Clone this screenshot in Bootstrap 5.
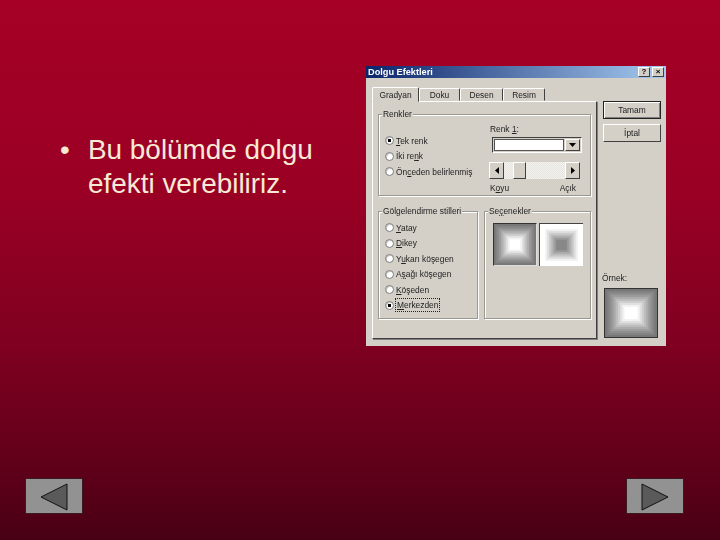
<!DOCTYPE html>
<html lang="tr">
<head>
<meta charset="utf-8">
<title>Dolgu Efektleri</title>
<link rel="stylesheet" href="https://cdn.jsdelivr.net/npm/bootstrap@5.3.0/dist/css/bootstrap.min.css">
<style>
html,body{margin:0;height:100%;}
body{background:#7a001c;overflow:hidden;}
.slide-page{width:720px;height:540px;background:linear-gradient(180deg,#a60026 0%,#9a0024 35%,#7e0020 65%,#62001a 85%,#480014 100%);font-family:"Liberation Sans",Arial,sans-serif;}
.slide-top{padding-top:66px;}
.slide-text{width:366px;padding:67px 0 0 60px;color:#f6ead6;font-size:27.9px;line-height:34px;}
.slide-bullet{width:28px;flex:none;}
.slide-lines{width:240px;}
.slide-nav{padding:0 37px 27px 26px;}
.nav-shape{display:block;width:56px;height:34px;padding:0;border:0;border-radius:0;background:#929292;box-shadow:0 0 0 1px #3c1a22;}
.nav-shape svg{display:block;width:56px;height:34px;}

.dlg{width:300px;height:280px;background:#d4d0c8;color:#222;font-family:"Liberation Sans",Arial,sans-serif;font-size:8.4px;line-height:12px;filter:blur(.4px);}
.dlg u{text-underline-offset:1px;}
.dlg-title{height:12px;padding:0 2px;background:linear-gradient(90deg,#0a246a,#a6caf0);color:#fff;font-weight:700;font-size:9.2px;line-height:12px;}
.dlg-ctl{width:12px;height:10px;margin-top:1px;background:#d4d0c8;border:1px solid;border-color:#fff #404040 #404040 #fff;color:#000;font-size:8px;line-height:8px;font-weight:700;text-align:center;}
.dlg-ctls{gap:2px;padding-right:0;}
.dlg-body{padding:8px 5px 0 6px;gap:6px;}
.dlg-left{width:225px;}
.dlg .dlg-tabs{border:0;height:15px;flex-wrap:nowrap;align-items:flex-end;}
.dlg-tabs .nav-link,.dlg-tabs .nav-link:hover{display:block;padding:0;height:13px;margin:0;border:1px solid;border-color:#fff #404040 transparent #fff;border-radius:2px 2px 0 0;background:#d4d0c8;color:#222;text-align:center;line-height:12px;}
.dlg-tabs .nav-link.active{height:15px;margin:0;border-color:#fff #404040 #d4d0c8 #fff;background:#d4d0c8;color:#222;position:relative;top:1px;line-height:14px;}
.tab-w1{width:47px;}.tab-w2{width:41px;}.tab-w3{width:43px;}.tab-w4{width:42px;}
.dlg-panel{height:238px;padding:12px 5px 0 5px;border:1px solid;border-color:#fff #404040 #404040 #fff;box-shadow:1px 1px 0 #808080;}
.dlg-group{position:relative;border:1px solid #9a9890;box-shadow:inset 1px 1px 0 #fff,1px 1px 0 #fff;}
.dlg-legend{display:table;margin:-7px 0 0 3px;padding:0 1px;background:#d4d0c8;line-height:12px;}
.grp-colors{height:82px;margin-bottom:15px;}
.grp-row{gap:6px;}
.grp-shade{width:100px;height:108px;}
.grp-opts{width:107px;height:108px;padding:0;}
.radio-list{display:flex;flex-direction:column;padding:0 0 0 6px;margin:0;}
.radio-item{display:flex;align-items:center;gap:2px;height:15.5px;margin:0;padding:0;min-height:0;}
.dlg .form-check-input{float:none;width:9px;height:9px;margin:0;flex:none;background-color:#fff;background-image:none;border:1px solid #7d7d7d;box-shadow:inset 1px 1px 0 #c8c8c8;}
.dlg .form-check-input:checked{background-color:#fff;background-image:radial-gradient(circle,#000 0 1.6px,transparent 2px);border-color:#7d7d7d;}
.colors-left{width:107px;padding-top:13px;}
.colors-right{width:95px;padding:3px 0 0 4px;}
.combo{width:90px;height:16px;margin:2px 0 9px 2px;background:#d4d0c8;border:1px solid;border-color:#404040 #fff #fff #404040;padding:1px;gap:1px;}
.combo-field{flex:1;background:#fff;border:1px solid #555;}
.spin-btn{width:15px;flex:none;background:#d4d0c8;border:1px solid;border-color:#fff #404040 #404040 #fff;display:flex;align-items:center;justify-content:center;}
.scroll-track{width:91px;height:17px;margin-left:-1px;background:repeating-conic-gradient(#e6e4de 0 25%,#f4f3ef 0 50%) 0 0/2px 2px;}
.scroll-btn{width:15px;flex:none;background:#d4d0c8;border:1px solid;border-color:#fff #404040 #404040 #fff;display:flex;align-items:center;justify-content:center;}
.scroll-thumb{width:13px;margin-left:9px;background:#d4d0c8;border:1px solid;border-color:#fff #404040 #404040 #fff;}
.scroll-labels{width:90px;padding:1px 4px 0 0;margin-top:2px;}
.swatches{padding:6px 0 0 8px;gap:2px;}
.swatch{width:44px;height:43px;display:block;}
.swatch-on{border:1px solid #333;border-color:#333 #ddd #ddd #333;}
.swatch-b{border-top:1px solid #444;border-left:1px solid #444;}
.shade-list{padding-top:3px;}
.focused{outline:1px dotted #222;outline-offset:0;padding:0 1px;}
.dlg-side{width:58px;padding-top:15px;}
.dlg-btn,.dlg-btn:hover{display:block;width:58px;height:18px;margin-bottom:5px;padding:0;border-radius:0;font-size:8.4px;line-height:14px;color:#222;background:#d4d0c8;border:1px solid;border-color:#fff #404040 #404040 #fff;}
.dlg-btn-def,.dlg-btn-def:hover{outline:1px solid #222;outline-offset:-1px;border-color:#222;box-shadow:inset 1px 1px 0 #fff,inset -1px -1px 0 #808080;}
.sample-lbl{margin:130px 0 4px -1px;}
.sample{width:54px;height:50px;margin-left:1px;display:block;border:1px solid #333;}
</style>
</head>
<body>
<svg width="0" height="0" class="d-block" aria-hidden="true">
  <symbol id="fade-dark" viewBox="0 0 24 24" preserveAspectRatio="none">
    <rect width="24" height="24" fill="#777"/><rect x="1" y="1" width="22" height="22" fill="#828282"/><rect x="2" y="2" width="20" height="20" fill="#8e8e8e"/><rect x="3" y="3" width="18" height="18" fill="#9c9c9c"/><rect x="4" y="4" width="16" height="16" fill="#acacac"/><rect x="5" y="5" width="14" height="14" fill="#bcbcbc"/><rect x="6" y="6" width="12" height="12" fill="#cecece"/><rect x="7" y="7" width="10" height="10" fill="#e0e0e0"/><rect x="8" y="8" width="8" height="8" fill="#f2f2f2"/><rect x="9" y="9" width="6" height="6" fill="#fff"/>
  </symbol>
  <symbol id="fade-light" viewBox="0 0 24 24" preserveAspectRatio="none">
    <rect width="24" height="24" fill="#fff"/><rect x="3" y="3" width="18" height="18" fill="#f0f0f0"/><rect x="4" y="4" width="16" height="16" fill="#e0e0e0"/><rect x="5" y="5" width="14" height="14" fill="#cecece"/><rect x="6" y="6" width="12" height="12" fill="#bcbcbc"/><rect x="7" y="7" width="10" height="10" fill="#aaa"/><rect x="8" y="8" width="8" height="8" fill="#999"/><rect x="9" y="9" width="6" height="6" fill="#888"/>
  </symbol>
</svg>
<main class="slide-page d-flex flex-column">
  <div class="slide-top d-flex">
    <div class="slide-text d-flex align-items-start">
      <span class="slide-bullet">•</span>
      <span class="slide-lines">Bu bölümde dolgu efekti verebiliriz.</span>
    </div>
    <section class="dlg d-flex flex-column">
      <div class="dlg-title d-flex justify-content-between">
        <span>Dolgu Efektleri</span>
        <span class="dlg-ctls d-flex"><span class="dlg-ctl">?</span><span class="dlg-ctl">×</span></span>
      </div>
      <div class="dlg-body d-flex">
        <div class="dlg-left">
          <ul class="nav nav-tabs dlg-tabs">
            <li class="nav-item"><a class="nav-link active tab-w1" href="#">Gradyan</a></li>
            <li class="nav-item"><a class="nav-link tab-w2" href="#">Doku</a></li>
            <li class="nav-item"><a class="nav-link tab-w3" href="#">Desen</a></li>
            <li class="nav-item"><a class="nav-link tab-w4" href="#">Resim</a></li>
          </ul>
          <div class="dlg-panel">
            <div class="dlg-group grp-colors">
              <div class="dlg-legend">Renkler</div>
              <div class="d-flex">
                <div class="colors-left">
                  <div class="radio-list">
                    <label class="radio-item form-check"><input class="form-check-input" type="radio" name="r1" checked><span><u>T</u>ek renk</span></label>
                    <label class="radio-item form-check"><input class="form-check-input" type="radio" name="r1"><span>İki re<u>n</u>k</span></label>
                    <label class="radio-item form-check"><input class="form-check-input" type="radio" name="r1"><span>Ön<u>c</u>eden belirlenmiş</span></label>
                  </div>
                </div>
                <div class="colors-right">
                  <div>Renk <u>1</u>:</div>
                  <div class="combo d-flex">
                    <div class="combo-field"></div>
                    <div class="spin-btn"><svg width="7" height="4" viewBox="0 0 7 4"><path d="M0 0h7L3.500 4z" fill="#000"/></svg></div>
                  </div>
                  <div class="scroll-track d-flex">
                    <div class="scroll-btn"><svg width="4" height="7" viewBox="0 0 4 7"><path d="M4 0v7L0 3.500z" fill="#000"/></svg></div>
                    <div class="scroll-thumb"></div>
                    <div class="scroll-btn ms-auto"><svg width="4" height="7" viewBox="0 0 4 7"><path d="M0 0v7l4-3.500z" fill="#000"/></svg></div>
                  </div>
                  <div class="scroll-labels d-flex justify-content-between"><span>K<u>o</u>yu</span><span>Açık</span></div>
                </div>
              </div>
            </div>
            <div class="d-flex grp-row">
              <div class="dlg-group grp-shade">
                <div class="dlg-legend">Gölgelendirme stilleri</div>
                <div class="radio-list shade-list">
                  <label class="radio-item form-check"><input class="form-check-input" type="radio" name="r2"><span><u>Y</u>atay</span></label>
                  <label class="radio-item form-check"><input class="form-check-input" type="radio" name="r2"><span><u>D</u>ikey</span></label>
                  <label class="radio-item form-check"><input class="form-check-input" type="radio" name="r2"><span>Y<u>u</u>karı köşegen</span></label>
                  <label class="radio-item form-check"><input class="form-check-input" type="radio" name="r2"><span>A<u>ş</u>ağı köşegen</span></label>
                  <label class="radio-item form-check"><input class="form-check-input" type="radio" name="r2"><span><u>K</u>öşeden</span></label>
                  <label class="radio-item form-check"><input class="form-check-input" type="radio" name="r2" checked><span class="focused"><u>M</u>erkezden</span></label>
                </div>
              </div>
              <div class="dlg-group grp-opts">
                <div class="dlg-legend">Se<u>ç</u>enekler</div>
                <div class="swatches d-flex">
                  <svg class="swatch swatch-on"><use href="#fade-dark"/></svg>
                  <svg class="swatch swatch-b"><use href="#fade-light"/></svg>
                </div>
              </div>
            </div>
          </div>
        </div>
        <div class="dlg-side">
          <button class="btn dlg-btn dlg-btn-def" type="button">Tamam</button>
          <button class="btn dlg-btn" type="button">İptal</button>
          <div class="sample-lbl">Örnek:</div>
          <svg class="sample"><use href="#fade-dark"/></svg>
        </div>
      </div>
    </section>
  </div>
  <nav class="slide-nav d-flex justify-content-between mt-auto">
    <button class="btn nav-shape" type="button" aria-label="Önceki"><svg viewBox="0 0 56 34"><path d="M15 18 41 5v26z" fill="#5a5a5a" stroke="#111"/></svg></button>
    <button class="btn nav-shape" type="button" aria-label="Sonraki"><svg viewBox="0 0 56 34"><path d="M41 18 15 5v26z" fill="#5a5a5a" stroke="#111"/></svg></button>
  </nav>
</main>
<script src="https://cdn.jsdelivr.net/npm/bootstrap@5.3.0/dist/js/bootstrap.bundle.min.js"></script>
</body>
</html>
